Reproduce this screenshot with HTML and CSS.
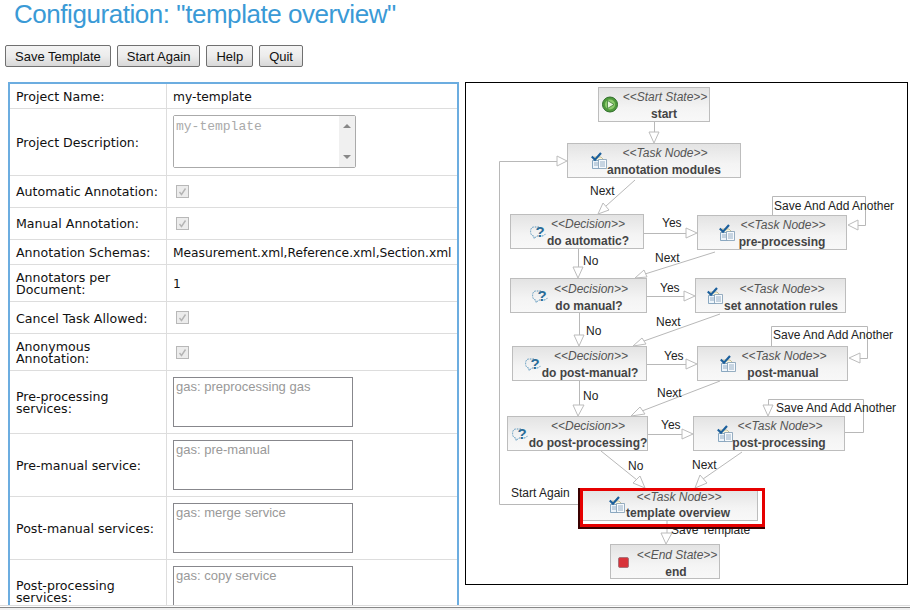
FILE: index.html
```html
<!DOCTYPE html>
<html lang="en">
<head>
    <meta charset="UTF-8">
    <title>Configuration: "template overview"</title>
    <link rel="stylesheet" href="styles.css">
</head>
<body>

<div class="page">
    <h1 class="title">Configuration: "template overview"</h1>

    <div class="toolbar">
        <button class="btn">Save Template</button>
        <button class="btn">Start Again</button>
        <button class="btn">Help</button>
        <button class="btn">Quit</button>
    </div>

    <div class="panels">
        <div class="form-panel">
            <table class="form-table">
                <tbody>
                    <tr class="row-s">
                        <td class="label">Project Name:</td>
                        <td class="value value-text">my-template</td>
                    </tr>
                    <tr class="row-desc">
                        <td class="label">Project Description:</td>
                        <td class="value">
                            <div class="desc-box">
                                <textarea class="desc-text" disabled>my-template</textarea>
                                <div class="scrollbar">
                                    <span class="arrow-up"></span>
                                    <span class="arrow-down"></span>
                                </div>
                            </div>
                        </td>
                    </tr>
                    <tr class="row-m">
                        <td class="label label-high">Automatic Annotation:</td>
                        <td class="value"><svg class="check" viewBox="0 0 13 13"><use href="#tick"/></svg></td>
                    </tr>
                    <tr class="row-m">
                        <td class="label label-high">Manual Annotation:</td>
                        <td class="value"><svg class="check" viewBox="0 0 13 13"><use href="#tick"/></svg></td>
                    </tr>
                    <tr class="row-s">
                        <td class="label">Annotation Schemas:</td>
                        <td class="value value-text">Measurement.xml,Reference.xml,Section.xml</td>
                    </tr>
                    <tr class="row-l">
                        <td class="label">Annotators per Document:</td>
                        <td class="value value-text">1</td>
                    </tr>
                    <tr class="row-m">
                        <td class="label">Cancel Task Allowed:</td>
                        <td class="value"><svg class="check" viewBox="0 0 13 13"><use href="#tick"/></svg></td>
                    </tr>
                    <tr class="row-l">
                        <td class="label">Anonymous Annotation:</td>
                        <td class="value"><svg class="check" viewBox="0 0 13 13"><use href="#tick"/></svg></td>
                    </tr>
                    <tr class="row-area">
                        <td class="label">Pre-processing services:</td>
                        <td class="value"><textarea class="service" disabled>gas: preprocessing gas</textarea></td>
                    </tr>
                    <tr class="row-area">
                        <td class="label">Pre-manual service:</td>
                        <td class="value"><textarea class="service" disabled>gas: pre-manual</textarea></td>
                    </tr>
                    <tr class="row-area">
                        <td class="label">Post-manual services:</td>
                        <td class="value"><textarea class="service" disabled>gas: merge service</textarea></td>
                    </tr>
                    <tr class="row-area">
                        <td class="label">Post-processing services:</td>
                        <td class="value"><textarea class="service" disabled>gas: copy service</textarea></td>
                    </tr>
                </tbody>
            </table>
        </div>

        <div class="diagram">
            <!-- viewBox uses page coordinates, so the nodes are easy to place -->
            <svg class="flow" viewBox="466 83 441 501">
                <defs>
                    <linearGradient id="nodeFill" x1="0" y1="0" x2="0" y2="1">
                        <stop offset="0" stop-color="#e3e3e3"/>
                        <stop offset="0.6" stop-color="#f4f4f4"/>
                        <stop offset="1" stop-color="#f8f8f8"/>
                    </linearGradient>
                    <symbol id="task" viewBox="0 0 16 17">
                        <path d="M3 5h7l3 3v4H3z" fill="#fdf6d8" stroke="#b9b48a" stroke-width="0.8"/>
                        <path d="M1.5 8.5h7l0 0v8h-7z" fill="#eef5fb" stroke="#6f94b3" stroke-width="0.8"/>
                        <path d="M7.5 7.5h8v9h-8z" fill="#f7fafd" stroke="#7d9ab3" stroke-width="0.8"/>
                        <path d="M9 10h5M9 12h5M9 14h5M3 11h4M3 13h4" stroke="#7f9db8" stroke-width="0.8"/>
                        <path d="M0.8 4.5l3.2 3.2L10 1" fill="none" stroke="#1b5f9c" stroke-width="2.2"/>
                    </symbol>
                    <symbol id="decision" viewBox="0 0 16 15">
                        <path d="M9 3H4C1.5 3 0.6 5 0.6 7.5S1.5 12 4 12v2.5L7 12h5c2 0 3.4-1.5 3.4-3" fill="none" stroke="#5b97bd" stroke-width="1" stroke-dasharray="1.6 1"/>
                        <text x="10" y="13" class="decision-mark">?</text>
                    </symbol>
                </defs>

                <!-- connectors -->
                <g class="edges">
                    <path d="M654.5 122V132"/>
                    <path d="M578 504.5H499.5V161.5H557"/>
                    <path d="M635 180L606 206"/>
                    <path d="M644 233.5H686"/>
                    <path d="M578.5 249V267"/>
                    <path d="M715 252L645 274"/>
                    <path d="M647 296.5H684"/>
                    <path d="M579.5 313V335"/>
                    <path d="M720 314L644 341"/>
                    <path d="M647 364.5H686"/>
                    <path d="M579.5 381V405"/>
                    <path d="M720 381L642 411"/>
                    <path d="M648 434.5H682"/>
                    <path d="M601 451L637 480"/>
                    <path d="M742 452L703 479"/>
                    <path d="M667 521V533"/>
                    <path d="M772.5 215V196.5H865.5V225.5H858"/>
                    <path d="M771.5 346V326.5H867.5V358.5H860"/>
                    <path d="M768.5 405V399.5H863.5V432.5H845"/>
                </g>
                <g class="heads">
                    <polygon points="649,132 659,132 654,143"/>
                    <polygon points="557,156 557,166 567,161"/>
                    <polygon points="603,203 609,210 598,214"/>
                    <polygon points="686,228 686,238 697,233"/>
                    <polygon points="573,267 583,267 578,278"/>
                    <polygon points="644,270 647,277 635,278"/>
                    <polygon points="684,291 684,301 695,296"/>
                    <polygon points="574,335 584,335 579,346"/>
                    <polygon points="642,338 646,344 633,346"/>
                    <polygon points="686,359 686,369 697,364"/>
                    <polygon points="573,405 584,405 578,416"/>
                    <polygon points="640,407 645,414 631,416"/>
                    <polygon points="682,429 682,439 693,434"/>
                    <polygon points="640,476 633,483 645,488"/>
                    <polygon points="700,475 707,483 695,488"/>
                    <polygon points="661,533 672,533 666,544"/>
                    <polygon points="858,220 858,230 848,225"/>
                    <polygon points="860,353 860,363 849,358"/>
                    <polygon points="763,405 773,405 768,416"/>
                </g>

                <!-- edge labels -->
                <g class="edge-labels">
                    <text x="590" y="195">Next</text>
                    <text x="662" y="227">Yes</text>
                    <text x="655" y="262">Next</text>
                    <text x="583" y="265">No</text>
                    <text x="660" y="292">Yes</text>
                    <text x="656" y="326">Next</text>
                    <text x="586" y="335">No</text>
                    <text x="664" y="360">Yes</text>
                    <text x="657" y="397">Next</text>
                    <text x="583" y="400">No</text>
                    <text x="661" y="429">Yes</text>
                    <text x="628" y="470">No</text>
                    <text x="692" y="469">Next</text>
                    <text x="511" y="497">Start Again</text>
                    <text x="671" y="534">Save Template</text>
                    <text x="774" y="210">Save And Add Another</text>
                    <text x="773" y="339">Save And Add Another</text>
                    <text x="776" y="412">Save And Add Another</text>
                </g>

                <!-- start -->
                <rect class="node" x="598.5" y="87.5" width="111" height="34"/>
                <circle cx="610" cy="104.5" r="7.5" fill="#4f9a3c" stroke="#2f6e2a"/>
                <circle cx="610" cy="104.5" r="5" fill="#8ccb6c"/>
                <polygon points="607.5,100.5 607.5,108.5 614,104.5" fill="#e8f6dc" stroke="#2f6e2a" stroke-width="0.7"/>
                <text class="stereo" x="665" y="101">&lt;&lt;Start State&gt;&gt;</text>
                <text class="name" x="664" y="118">start</text>

                <!-- annotation modules -->
                <rect class="node" x="567.5" y="143.5" width="173" height="34"/>
                <use href="#task" x="591" y="152" width="16" height="17"/>
                <text class="stereo" x="665" y="157">&lt;&lt;Task Node&gt;&gt;</text>
                <text class="name" x="664" y="174">annotation modules</text>

                <!-- do automatic -->
                <rect class="node" x="510.5" y="214.5" width="133" height="34"/>
                <use href="#decision" x="530" y="224" width="16" height="15"/>
                <text class="stereo" x="588" y="228">&lt;&lt;Decision&gt;&gt;</text>
                <text class="name" x="588" y="245">do automatic?</text>

                <!-- pre-processing -->
                <rect class="node" x="697.5" y="215.5" width="149" height="34"/>
                <use href="#task" x="719" y="224" width="16" height="17"/>
                <text class="stereo" x="783" y="229">&lt;&lt;Task Node&gt;&gt;</text>
                <text class="name" x="782" y="246">pre-processing</text>

                <!-- do manual -->
                <rect class="node" x="510.5" y="278.5" width="136" height="34"/>
                <use href="#decision" x="532" y="288" width="16" height="15"/>
                <text class="stereo" x="591" y="293">&lt;&lt;Decision&gt;&gt;</text>
                <text class="name" x="589" y="310">do manual?</text>

                <!-- set annotation rules -->
                <rect class="node" x="695.5" y="278.5" width="150" height="34"/>
                <use href="#task" x="707" y="287" width="16" height="17"/>
                <text class="stereo" x="782" y="293">&lt;&lt;Task Node&gt;&gt;</text>
                <text class="name" x="781" y="310">set annotation rules</text>

                <!-- do post-manual -->
                <rect class="node" x="512.5" y="346.5" width="134" height="34"/>
                <use href="#decision" x="525" y="356" width="16" height="15"/>
                <text class="stereo" x="591" y="360">&lt;&lt;Decision&gt;&gt;</text>
                <text class="name" x="590" y="377">do post-manual?</text>

                <!-- post-manual -->
                <rect class="node" x="697.5" y="346.5" width="150" height="34"/>
                <use href="#task" x="720" y="355" width="16" height="17"/>
                <text class="stereo" x="784" y="360">&lt;&lt;Task Node&gt;&gt;</text>
                <text class="name" x="783" y="377">post-manual</text>

                <!-- do post-processing -->
                <rect class="node" x="507.5" y="416.5" width="140" height="34"/>
                <use href="#decision" x="512" y="426" width="16" height="15"/>
                <text class="stereo" x="588" y="430">&lt;&lt;Decision&gt;&gt;</text>
                <text class="name" x="588" y="447">do post-processing?</text>

                <!-- post-processing -->
                <rect class="node" x="693.5" y="416.5" width="151" height="34"/>
                <use href="#task" x="717" y="425" width="16" height="17"/>
                <text class="stereo" x="780" y="430">&lt;&lt;Task Node&gt;&gt;</text>
                <text class="name" x="779" y="447">post-processing</text>

                <!-- template overview, current step -->
                <rect class="node" x="582.5" y="489.5" width="175" height="31"/>
                <use href="#task" x="609" y="496" width="16" height="17"/>
                <text class="stereo" x="679" y="501">&lt;&lt;Task Node&gt;&gt;</text>
                <text class="name" x="678" y="517">template overview</text>
                <path class="current-shadow" d="M579 488V528H765"/>
                <rect class="current" x="581.5" y="489.5" width="182" height="36"/>

                <!-- end -->
                <rect class="node" x="610.5" y="544.5" width="109" height="34"/>
                <rect x="618.5" y="557.5" width="10" height="10" rx="1.5" fill="#d8333a" stroke="#a9737a"/>
                <text class="stereo" x="677" y="559">&lt;&lt;End State&gt;&gt;</text>
                <text class="name" x="676" y="576">end</text>
            </svg>
        </div>
    </div>
</div>

<div class="status-line"></div>

<svg class="sprites" width="0" height="0">
    <symbol id="tick" viewBox="0 0 13 13">
        <rect x="0.5" y="0.5" width="12" height="12" fill="#ececec" stroke="#b8b8b8"/>
        <path d="M3.5 7l2 2.5L9.5 3.5" fill="none" stroke="#b4b4b4" stroke-width="1.4"/>
    </symbol>
</svg>

</body>
</html>
```

FILE: styles.css
```css
body {
    margin: 0;
    background-color: #fff;
    font-family: 'DejaVu Sans', sans-serif;
    overflow: hidden;
}

.page {
    height: 605px;
    overflow: hidden;
}

.title {
    margin: 0;
    padding-left: 14px;
    height: 30px;
    font-family: 'Liberation Sans', sans-serif;
    font-size: 26px;
    font-weight: normal;
    letter-spacing: -0.45px;
    line-height: 29px;
    color: #3a9ad6;
}

.toolbar {
    display: flex;
    gap: 6px;
    margin-top: 15px;
    padding-left: 5px;
}

.btn {
    height: 22px;
    padding: 0 9px;
    border: 1px solid #707070;
    border-radius: 2px;
    background: linear-gradient(#f4f4f4, #ececec 50%, #d8d8d8);
    font-family: 'Liberation Sans', sans-serif;
    font-size: 13px;
    color: #111;
}

.panels {
    display: flex;
    align-items: flex-start;
    gap: 6px;
    margin-top: 15px;
    padding-left: 8px;
}

.form-panel {
    width: 451px;
    box-sizing: border-box;
    border: 2px solid #6cade0;
    border-bottom: none;
}

.form-table {
    width: 100%;
    border-collapse: separate;
    border-spacing: 0;
    table-layout: fixed;
    font-size: 12.6px;
    line-height: 12px;
    color: #111;
}

.form-table td {
    padding: 0 6px;
    border-bottom: 1px solid #ddd;
    vertical-align: middle;
}

.form-table .label {
    width: 144px;
    padding-top: 2px;
    border-right: 1px solid #ddd;
}

.form-table .label-high {
    padding-top: 0;
}

.form-table .value-text {
    padding-top: 2px;
    font-size: 12.25px;
}

.row-s { height: 25px; }
.row-m { height: 32px; }
.row-l { height: 37px; }
.row-area { height: 63px; }
.row-desc { height: 67px; }

.check {
    display: block;
    width: 13px;
    height: 13px;
    margin-left: 3px;
}

.desc-box {
    display: flex;
    box-sizing: border-box;
    width: 183px;
    height: 53px;
    margin-top: -1px;
    border: 1px solid #aaa;
    border-radius: 2px;
}

.desc-text {
    flex: 1;
    min-width: 0;
    padding: 3px 2px;
    border: none;
    resize: none;
    background: #fff;
    font-family: 'Liberation Mono', monospace;
    font-size: 13px;
    color: #aaa;
}

.scrollbar {
    display: flex;
    flex-direction: column;
    justify-content: space-between;
    align-items: center;
    width: 16px;
    padding: 8px 0;
    box-sizing: border-box;
    background-color: #f0f0f0;
}

.arrow-up {
    border: 4px solid transparent;
    border-top: none;
    border-bottom-color: #888;
}

.arrow-down {
    border: 4px solid transparent;
    border-bottom: none;
    border-top-color: #888;
}

.service {
    display: block;
    box-sizing: border-box;
    width: 180px;
    height: 50px;
    padding: 1px 2px;
    border: 1px solid #87878c;
    resize: none;
    background: #fff;
    font-family: 'Liberation Sans', sans-serif;
    font-size: 13px;
    color: #999;
}

.diagram {
    width: 443px;
    height: 503px;
    box-sizing: border-box;
    border: 1px solid #000;
}

.flow {
    display: block;
    width: 441px;
    height: 501px;
}

.edges path {
    fill: none;
    stroke: #b8b8b8;
}

.heads polygon {
    fill: #fff;
    stroke: #bcbcbc;
}

.edge-labels text {
    font-family: 'Liberation Sans', sans-serif;
    font-size: 12px;
    fill: #222;
}

.node {
    fill: url(#nodeFill);
    stroke: #bdbdbd;
}

.stereo {
    font-family: 'Liberation Sans', sans-serif;
    font-size: 12px;
    font-style: italic;
    text-anchor: middle;
    fill: #555;
}

.name {
    font-family: 'Liberation Sans', sans-serif;
    font-size: 12px;
    font-weight: bold;
    text-anchor: middle;
    fill: #444;
}

.decision-mark {
    font-family: 'Liberation Sans', sans-serif;
    font-size: 15px;
    font-weight: bold;
    text-anchor: middle;
    fill: #2b6c98;
}

.current {
    fill: none;
    stroke: #e60000;
    stroke-width: 3;
}

.current-shadow {
    fill: none;
    stroke: #3a0000;
    stroke-width: 2;
}

.status-line {
    height: 5px;
    box-sizing: border-box;
    border-top: 1px solid #ddd;
    background: linear-gradient(#fff 1px, #888 1px, #888 2px, #f0f0f0 2px);
}

.sprites {
    position: absolute;
}
```
